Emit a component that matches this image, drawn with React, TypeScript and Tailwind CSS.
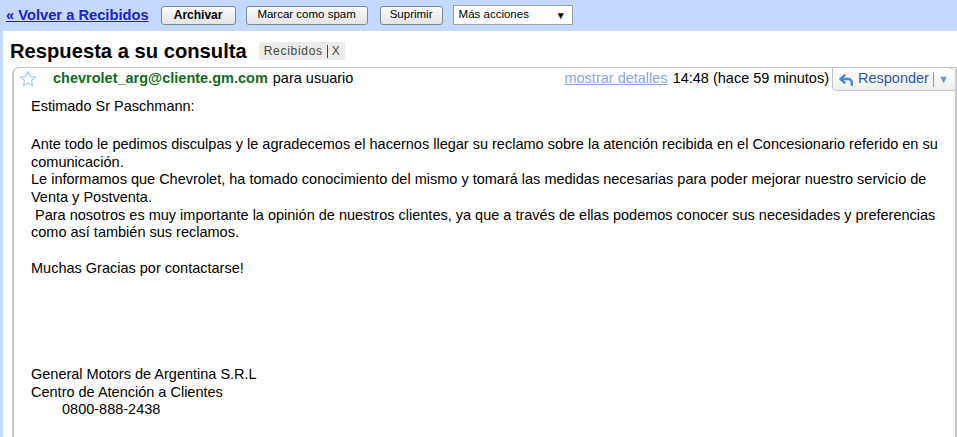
import React from "react";

const body: string[] = [
  "Ante todo le pedimos disculpas y le agradecemos el hacernos llegar su reclamo sobre la atención recibida en el Concesionario referido en su",
  "comunicación.",
  "Le informamos que Chevrolet, ha tomado conocimiento del mismo y tomará las medidas necesarias para poder mejorar nuestro servicio de",
  "Venta y Postventa.",
  " Para nosotros es muy importante la opinión de nuestros clientes, ya que a través de ellas podemos conocer sus necesidades y preferencias",
  "como así también sus reclamos.",
  "",
  "Muchas Gracias por contactarse!",
  "",
  "",
  "",
  "",
  "",
  "General Motors de Argentina S.R.L",
  "Centro de Atención a Clientes",
];

function Star() {
  return (
    <svg width="18" height="18" viewBox="0 0 24 24" className="shrink-0">
      <polygon
        points="12,2 14.9,8.6 22,9.3 16.6,14 18.2,21 12,17.3 5.8,21 7.4,14 2,9.3 9.1,8.6"
        fill="none"
        stroke="#a9c9f2"
        strokeWidth="1.6"
        strokeLinejoin="round"
      />
    </svg>
  );
}

function ReplyIcon() {
  return (
    <svg width="18" height="16" viewBox="0 0 24 22" fill="none">
      <path d="M20 19v-3a5 5 0 0 0-5-5H5" stroke="#4f86d9" strokeWidth="3.4" strokeLinecap="round" />
      <path d="M10 16 4.5 11 10 6" stroke="#4f86d9" strokeWidth="3.4" strokeLinecap="round" strokeLinejoin="round" />
    </svg>
  );
}

const btn =
  "h-[19px] px-[10px] flex items-center rounded-[3px] border border-[#7a8799] bg-gradient-to-b from-[#fbfbfb] to-[#e4e4e4] text-[11.5px] text-black leading-none";

export default function App() {
  return (
    <div
      className="w-[957px] h-[437px] overflow-hidden bg-white flex flex-col"
      style={{ fontFamily: '"Liberation Sans", Arial, sans-serif' }}
    >
      {/* toolbar */}
      <div className="h-[31px] shrink-0 bg-[#c3d9ff] flex items-center pl-[6px] pb-[1px]">
        <a className="text-[14.7px] font-bold text-[#2020cc] underline mr-[12px]" href="#">
          « Volver a Recibidos
        </a>
        <div className={btn + " font-bold text-[12px] w-[75px] justify-center mr-[10px]"}>Archivar</div>
        <div className={btn + " w-[122px] justify-center mr-[12px]"}>Marcar como spam</div>
        <div className={btn + " w-[63px] justify-center mr-[10px]"}>Suprimir</div>
        <div className="h-[20px] w-[120px] bg-white border border-[#a0a0a0] flex items-center justify-between pl-[5px] pr-[6px] text-[11.5px]">
          <span>Más acciones</span>
          <span className="text-[10px]">▼</span>
        </div>
      </div>

      <div className="flex-1 flex flex-col border-l-[3px] border-[#c3d9ff]">
        {/* title */}
        <div className="h-[36px] flex items-center pl-[7px] pt-[4px]">
          <h1 className="text-[20.2px] font-bold text-black leading-none mr-[12px]">Respuesta a su consulta</h1>
          <span className="h-[18px] flex items-center bg-[#ebebeb] rounded-[2px] px-[5px] text-[12px] text-[#444] tracking-[0.7px]">
            Recibidos
            <span className="mx-[4px] h-[13px] w-px bg-[#444]" />X
          </span>
        </div>

        {/* message card */}
        <div className="flex-1 ml-[9px] flex flex-col rounded-tl-[7px] border-t border-l-2 border-r-2 border-t-[#c8c8c8] border-l-[#c9c9cd] border-r-[#c9c9cd]">
          <div className="h-[24px] flex items-start">
            <div className="pl-[5px] pt-[2px] w-[39px]">
              <Star />
            </div>
            <div className="flex-1 flex items-center h-[22px] text-[14.5px] text-black whitespace-nowrap">
              <span className="font-bold text-[#146b1f]">chevrolet_arg@cliente.gm.com</span>
              <span className="ml-[5px]">para usuario</span>
              <span className="ml-auto text-[#8ba7e6] underline">mostrar detalles</span>
              <span className="ml-[5px] mr-[3px]">14:48 (hace 59 minutos)</span>
            </div>
            <div className="h-[24px] w-[123px] -mt-px flex items-center rounded-tr-[7px] rounded-bl-[5px] border border-[#c2c2c2] border-r-0 bg-gradient-to-b from-[#ffffff] to-[#eeeeee] pl-[4px] text-[14.5px] text-[#2a5ab8]">
              <ReplyIcon />
              <span className="ml-[3px]">Responder</span>
              <span className="ml-[4px] h-[15px] w-px bg-[#999]" />
              <span className="ml-[4px] text-[#6f96dc] text-[11px]">▼</span>
            </div>
          </div>

          <div className="pl-[17px] pt-[6px] text-[14.5px] leading-[17.7px] text-black">
            <div className="whitespace-pre h-[38px]">Estimado Sr Paschmann:</div>
            {body.map((l, i) => (
              <div key={i} className="whitespace-pre h-[17.7px]">
                {l}
              </div>
            ))}
            <div className="whitespace-pre h-[17.7px] pl-[31px]">0800-888-2438</div>
          </div>
        </div>
      </div>
    </div>
  );
}
